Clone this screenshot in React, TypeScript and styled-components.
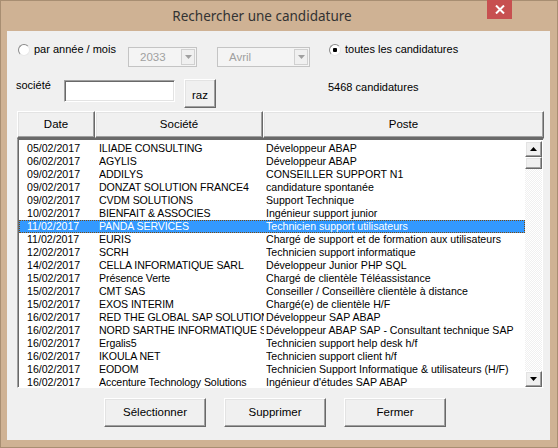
import styled, { createGlobalStyle } from "styled-components";

const GlobalStyle = createGlobalStyle`
  body {
    margin: 0;
    background: #cfb294;
    font-family: "Liberation Sans", Arial, sans-serif;
  }
`;

const rows = [
  ["05/02/2017", "ILIADE CONSULTING", "Développeur ABAP"],
  ["06/02/2017", "AGYLIS", "Développeur ABAP"],
  ["09/02/2017", "ADDILYS", "CONSEILLER SUPPORT N1"],
  ["09/02/2017", "DONZAT SOLUTION FRANCE4", "candidature spontanée"],
  ["09/02/2017", "CVDM SOLUTIONS", "Support Technique"],
  ["10/02/2017", "BIENFAIT & ASSOCIES", "Ingénieur support junior"],
  ["11/02/2017", "PANDA SERVICES", "Technicien support utilisateurs"],
  ["11/02/2017", "EURIS", "Chargé de support et de formation aux utilisateurs"],
  ["12/02/2017", "SCRH", "Technicien support informatique"],
  ["14/02/2017", "CELLA INFORMATIQUE SARL", "Développeur Junior PHP SQL"],
  ["15/02/2017", "Présence Verte", "Chargé de clientèle Téléassistance"],
  ["15/02/2017", "CMT SAS", "Conseiller / Conseillère clientèle à distance"],
  ["15/02/2017", "EXOS INTERIM", "Chargé(e) de clientèle H/F"],
  ["16/02/2017", "RED THE GLOBAL SAP SOLUTION", "Développeur SAP ABAP"],
  ["16/02/2017", "NORD SARTHE INFORMATIQUE SERVICES", "Développeur ABAP SAP - Consultant technique SAP"],
  ["16/02/2017", "Ergalis5", "Technicien support help desk h/f"],
  ["16/02/2017", "IKOULA NET", "Technicien support client h/f"],
  ["16/02/2017", "EODOM", "Technicien Support Informatique & utilisateurs (H/F)"],
  ["16/02/2017", "Accenture Technology Solutions", "Ingénieur d'études SAP ABAP"],
];

const selectedIndex = 6;

function App() {
  return (
    <>
      <GlobalStyle />
      <Window>
        <TitleBar>
          <span />
          <Title>Rechercher une candidature</Title>
          <CloseButton>
            <svg width="10" height="9" viewBox="0 0 10 9">
              <path d="M1 0.5 L9 8.5 M9 0.5 L1 8.5" stroke="white" strokeWidth="2" />
            </svg>
          </CloseButton>
        </TitleBar>

        <Client>
          <FilterRow>
            <RadioOption $width={110}>
              <RadioDot />
              par année / mois
            </RadioOption>
            <Combo $width={69} $disabled>
              <ComboText>2033</ComboText>
              <ComboArrow>
                <svg width="7" height="4" viewBox="0 0 7 4">
                  <path d="M0 0 H7 L3.5 4 Z" fill="#a0a0a0" />
                </svg>
              </ComboArrow>
            </Combo>
            <Combo $width={93} $disabled style={{ marginLeft: 20 }}>
              <ComboText>Avril</ComboText>
              <ComboArrow>
                <svg width="7" height="4" viewBox="0 0 7 4">
                  <path d="M0 0 H7 L3.5 4 Z" fill="#a0a0a0" />
                </svg>
              </ComboArrow>
            </Combo>
            <RadioOption $width={200} style={{ marginLeft: 19 }}>
              <RadioDot $checked />
              toutes les candidatures
            </RadioOption>
          </FilterRow>

          <SearchRow>
            <FieldLabel>société</FieldLabel>
            <TextBox />
            <RazButton>raz</RazButton>
            <Count>5468 candidatures</Count>
          </SearchRow>

          <ListArea>
            <Header>
              <HeaderCell $width={78}>Date</HeaderCell>
              <HeaderCell $width={168}>Société</HeaderCell>
              <HeaderCell $width={281}>Poste</HeaderCell>
            </Header>
            <ListBox>
              <Rows>
                {rows.map((r, i) => (
                  <Row key={i} $selected={i === selectedIndex}>
                    <DateCell>{r[0]}</DateCell>
                    <CompanyCell>{r[1]}</CompanyCell>
                    <PostCell>{r[2]}</PostCell>
                  </Row>
                ))}
              </Rows>
              <ScrollBar>
                <ScrollButton>
                  <svg width="7" height="4" viewBox="0 0 7 4">
                    <path d="M0 4 H7 L3.5 0 Z" fill="#000" />
                  </svg>
                </ScrollButton>
                <Thumb />
                <Track />
                <ScrollButton>
                  <svg width="7" height="4" viewBox="0 0 7 4">
                    <path d="M0 0 H7 L3.5 4 Z" fill="#000" />
                  </svg>
                </ScrollButton>
              </ScrollBar>
            </ListBox>
          </ListArea>

          <ButtonRow>
            <PushButton>Sélectionner</PushButton>
            <PushButton>Supprimer</PushButton>
            <PushButton>Fermer</PushButton>
          </ButtonRow>
        </Client>
      </Window>
    </>
  );
}
export default App;

// cadre de la fenêtre
const Window = styled.div`
  width: 558px;
  height: 448px;
  box-sizing: border-box;
  border: 1px solid #a88e72;
  background: #cfb294;
  display: flex;
  flex-direction: column;
`;

const TitleBar = styled.div`
  height: 30px;
  display: grid;
  grid-template-columns: 1fr auto 1fr;
  align-items: start;
`;

const Title = styled.div`
  font-family: "Noto Sans", "Open Sans", sans-serif;
  font-size: 13.5px;
  color: #333;
  line-height: 16px;
  padding-top: 7px;
  margin-right: 34px;
`;

const CloseButton = styled.div`
  justify-self: end;
  margin-right: 45px;
  width: 25px;
  height: 19px;
  margin-top: -1px;
  background: #c75050;
  display: flex;
  align-items: center;
  justify-content: center;
`;

// zone cliente grise
const Client = styled.div`
  margin: 0 7px 7px 6px;
  height: 409px;
  background: #f0f0f0;
  display: flex;
  flex-direction: column;
  font-size: 11px;
  line-height: 13px;
  color: #000;
`;

const FilterRow = styled.div`
  display: flex;
  align-items: flex-start;
  height: 20px;
  margin-top: 16px;
  padding-left: 11px;
`;

const RadioOption = styled.div<{ $width: number }>`
  width: ${(p) => p.$width}px;
  display: flex;
  align-items: center;
  gap: 4px;
  margin-top: -4px;
  white-space: nowrap;
`;

const RadioDot = styled.span<{ $checked?: boolean }>`
  width: 10px;
  height: 10px;
  border-radius: 50%;
  border: 1px solid #8a8a8a;
  border-right-color: #e8e8e8;
  border-bottom-color: #e8e8e8;
  background: ${(p) => (p.$checked ? "radial-gradient(circle, #000 0 2px, #fff 2.5px)" : "#fff")};
  flex: none;
`;

const Combo = styled.div<{ $width: number; $disabled?: boolean }>`
  width: ${(p) => p.$width}px;
  height: 20px;
  box-sizing: border-box;
  border: 1px solid #c4c4c4;
  background: #f4f4f4;
  display: flex;
  align-items: center;
  color: ${(p) => (p.$disabled ? "#a0a0a0" : "#000")};
  font-size: 11.5px;
`;

const ComboText = styled.span`
  flex: 1;
  padding-left: 11px;
`;

const ComboArrow = styled.span`
  width: 14px;
  height: 16px;
  margin-right: 1px;
  box-sizing: border-box;
  border: 1px solid #d0d0d0;
  background: #f0f0f0;
  display: flex;
  align-items: center;
  justify-content: center;
`;

const SearchRow = styled.div`
  display: flex;
  align-items: flex-start;
  height: 29px;
  margin-top: 12px;
  padding-left: 9px;
`;

const FieldLabel = styled.span`
  width: 48px;
  margin-top: 0;
`;

const TextBox = styled.div`
  width: 111px;
  height: 22px;
  margin-top: 1px;
  box-sizing: border-box;
  background: #fff;
  border: 1px solid;
  border-color: #a0a0a0 #fff #fff #a0a0a0;
  box-shadow: inset 1px 1px #696969, inset -1px -1px #e3e3e3;
`;

const raised = `
  box-sizing: border-box;
  background: #f0f0f0;
  border: 1px solid;
  border-color: #fff #696969 #696969 #fff;
  box-shadow: inset -1px -1px #a0a0a0, inset 1px 1px #e3e3e3;
`;

const RazButton = styled.div`
  ${raised}
  width: 32px;
  height: 29px;
  margin-left: 9px;
  display: flex;
  align-items: flex-end;
  justify-content: center;
  padding-bottom: 5px;
  font-size: 11.5px;
`;

const Count = styled.span`
  margin-left: 112px;
  margin-top: 2px;
`;

// liste des candidatures
const ListArea = styled.div`
  margin: 3px 0 0 10px;
  width: 527px;
  display: flex;
  flex-direction: column;
`;

const Header = styled.div`
  display: flex;
  height: 27px;
`;

const HeaderCell = styled.div<{ $width: number }>`
  ${raised}
  width: ${(p) => p.$width}px;
  display: flex;
  align-items: center;
  justify-content: center;
  font-size: 11.5px;
`;

const ListBox = styled.div`
  height: 250px;
  box-sizing: border-box;
  background: #fff;
  border: 1px solid;
  border-color: #696969 #f0f0f0 #fff #a0a0a0;
  box-shadow: inset 1px 1px #696969;
  display: flex;
  padding: 3px 0 0 1px;
`;

const Rows = styled.div`
  flex: 1;
  min-width: 0;
  display: flex;
  flex-direction: column;
`;

const Row = styled.div<{ $selected?: boolean }>`
  display: flex;
  height: 13px;
  font-size: 10.6px;
  line-height: 13px;
  white-space: nowrap;
  background: ${(p) => (p.$selected ? "#3399ff" : "transparent")};
  color: ${(p) => (p.$selected ? "#fff" : "#000")};
  outline: ${(p) => (p.$selected ? "1px dotted #7a4a10" : "none")};
  outline-offset: -1px;
`;

const Cell = styled.span`
  overflow: hidden;
  flex: none;
`;

const DateCell = styled(Cell)`
  width: 72px;
  padding-left: 8px;
`;

const CompanyCell = styled(Cell)`
  width: 165px;
  margin-right: 2px;
  letter-spacing: -0.1px;
`;

const PostCell = styled(Cell)`
  flex: 1;
`;

const ScrollBar = styled.div`
  width: 17px;
  margin: -1px 1px 0 0;
  display: flex;
  flex-direction: column;
`;

const ScrollButton = styled.div`
  ${raised}
  height: 16px;
  display: flex;
  align-items: center;
  justify-content: center;
`;

const Thumb = styled.div`
  ${raised}
  height: 12px;
`;

const Track = styled.div`
  flex: 1;
  background: repeating-conic-gradient(#f0f0f0 0 25%, #fff 0 50%) 0 0 / 2px 2px;
`;

const ButtonRow = styled.div`
  display: flex;
  gap: 18px;
  margin-top: 10px;
  padding-left: 97px;
`;

const PushButton = styled.div`
  ${raised}
  width: 102px;
  height: 29px;
  display: flex;
  align-items: center;
  justify-content: center;
  font-size: 11.5px;
`;
